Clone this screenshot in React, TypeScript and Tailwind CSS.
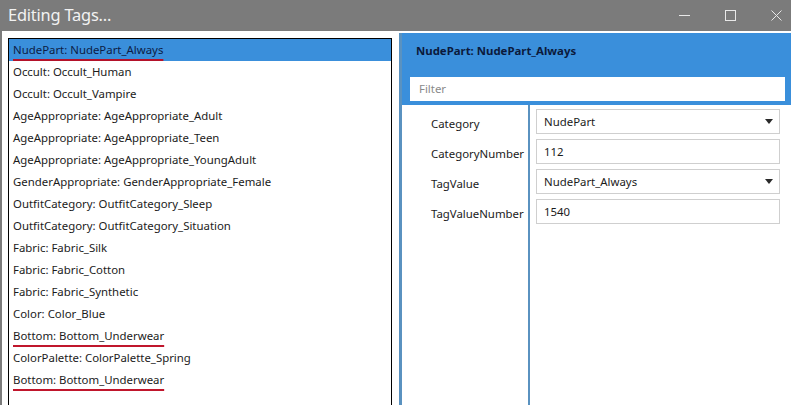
const tags = [
  'Occult: Occult_Human',
  'Occult: Occult_Vampire',
  'AgeAppropriate: AgeAppropriate_Adult',
  'AgeAppropriate: AgeAppropriate_Teen',
  'AgeAppropriate: AgeAppropriate_YoungAdult',
  'GenderAppropriate: GenderAppropriate_Female',
  'OutfitCategory: OutfitCategory_Sleep',
  'OutfitCategory: OutfitCategory_Situation',
  'Fabric: Fabric_Silk',
  'Fabric: Fabric_Cotton',
  'Fabric: Fabric_Synthetic',
  'Color: Color_Blue',
  'Bottom: Bottom_Underwear',
  'ColorPalette: ColorPalette_Spring',
  'Bottom: Bottom_Underwear',
];

// rows marked with a red line in the screenshot
const marked = new Set([12, 14]);

const props = [
  { label: 'Category', value: 'NudePart', select: true },
  { label: 'CategoryNumber', value: '112', select: false },
  { label: 'TagValue', value: 'NudePart_Always', select: true },
  { label: 'TagValueNumber', value: '1540', select: false },
];

export default function App() {
  return (
    <div className="w-[791px] h-[405px] bg-[#7b7b7b] flex flex-col overflow-hidden font-['Noto_Sans',sans-serif]">
      {/* Title bar */}
      <div className="h-[31px] shrink-0 flex items-center justify-between">
        <span className="pl-2 text-[16.4px] text-[#f2f2f2] tracking-[-0.2px]">Editing Tags...</span>
        <div className="flex items-center h-full mr-[-8px] text-[#e8e8e8]">
          <div className="w-[46px] h-full flex items-center justify-center">
            <svg width="11" height="11" viewBox="0 0 11 11"><path d="M0 5.5h11" stroke="currentColor" strokeWidth="1" /></svg>
          </div>
          <div className="w-[46px] h-full flex items-center justify-center">
            <svg width="11" height="11" viewBox="0 0 11 11"><rect x="0.5" y="0.5" width="10" height="10" fill="none" stroke="currentColor" strokeWidth="1" /></svg>
          </div>
          <div className="w-[46px] h-full flex items-center justify-center">
            <svg width="11" height="11" viewBox="0 0 11 11"><path d="M0.5 0.5l10 10M10.5 0.5l-10 10" stroke="currentColor" strokeWidth="1" /></svg>
          </div>
        </div>
      </div>

      <div className="flex-1 flex bg-white ml-[2px] min-h-0">
        {/* Left: tag list */}
        <div className="w-[397px] shrink-0 pl-[6px] pt-[7px]">
          <div className="w-[384px] h-[400px] border border-black text-[11.4px] text-[#1b1b1b]">
            <div className="h-[22px] bg-[#3a8fdb] flex items-center pl-1 text-[#0d1c45]">
              <span className="underline decoration-[#b3122a] decoration-2 underline-offset-[5px]">NudePart: NudePart_Always</span>
            </div>
            {tags.map((t, i) => (
              <div key={i} className="h-[22px] flex items-center pl-1">
                <span className={marked.has(i) ? 'underline decoration-[#c0162c] decoration-2 underline-offset-[5px]' : ''}>{t}</span>
              </div>
            ))}
          </div>
        </div>

        {/* Right: editor */}
        <div className="flex-1 flex flex-col mt-[2px] border-l-[3px] border-[#5a92c0] min-w-0">
          <div className="h-[72px] shrink-0 bg-[#3a8fdb] flex flex-col pl-2 pr-[6px]">
            <div className="h-[36px] flex items-center pl-[6px] text-[11.4px] font-bold text-[#0b1a3c]">NudePart: NudePart_Always</div>
            <div className="mt-2 h-[24px] bg-white flex items-center pl-[9px] text-[11.4px] text-[#8a8a8a]">Filter</div>
          </div>
          <div className="flex-1 flex min-h-0">
            <div className="w-[126px] shrink-0 pt-[4px] pl-[29px] text-[11.4px] text-[#1b1b1b]">
              {props.map((p) => (
                <div key={p.label} className="h-[30px] flex items-center">{p.label}</div>
              ))}
            </div>
            <div className="w-[2px] bg-[#5a92c0]" />
            <div className="flex-1 pl-[6px] pr-[11px] pt-[4px] flex flex-col gap-[5px]">
              {props.map((p) => (
                <div key={p.label} className="h-[25px] border border-[#cfcfcf] flex items-center justify-between pl-[7px] pr-[6px] text-[11.4px] text-[#1b1b1b]">
                  <span>{p.value}</span>
                  {p.select && (
                    <svg width="8" height="5" viewBox="0 0 8 5"><path d="M0 0h8L4 5z" fill="#2a2a2a" /></svg>
                  )}
                </div>
              ))}
            </div>
          </div>
        </div>
      </div>
    </div>
  );
}
